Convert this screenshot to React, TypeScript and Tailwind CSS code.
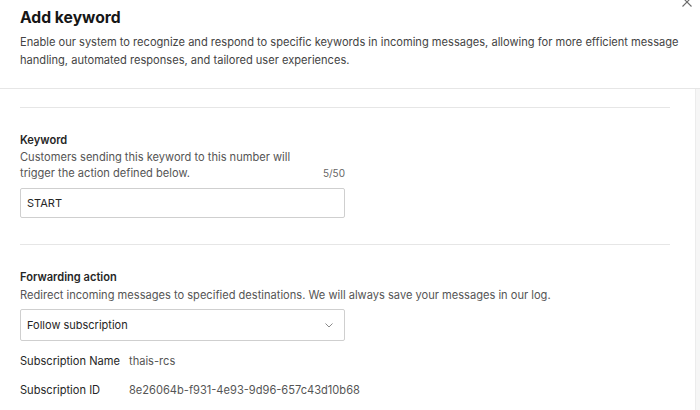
import React from "react";

const Divider = () => <div className="h-px bg-[#e6e6e6]" />;

const ChevronDown = () => (
  <svg width="12" height="12" viewBox="0 0 12 12" fill="none" stroke="#8a8a8a" strokeWidth="1">
    <path d="M2.5 4.5 6 8l3.5-3.5" />
  </svg>
);

const CloseIcon = () => (
  <svg width="12" height="12" viewBox="0 0 12 12" fill="none" stroke="#6b6b6b" strokeWidth="1.1">
    <path d="M1.5 1.5l9 9M10.5 1.5l-9 9" />
  </svg>
);

export default function App() {
  return (
    <div
      className="relative w-[700px] h-[410px] overflow-hidden bg-white text-[#1f1f1f]"
      style={{ fontFamily: "Inter, 'Noto Sans', sans-serif" }}
    >
      {/* header */}
      <div className="px-5 pt-[6px] pb-[19px] border-b border-[#e6e6e6]">
        <h2 className="text-[15.7px] leading-[24px] font-bold text-[#161616]">Add keyword</h2>
        <p className="mt-[3px] text-[11.1px] leading-[18px] text-[#444]">
          Enable our system to recognize and respond to specific keywords in incoming messages, allowing for more efficient message
          handling, automated responses, and tailored user experiences.
        </p>
      </div>
      <button className="absolute right-[7px] top-[-4px] p-0">
        <CloseIcon />
      </button>

      {/* body */}
      <div className="flex h-[321px]">
        <div className="flex-1 pl-5 pr-[25px] pt-[18px]">
          <Divider />

          <div className="pt-6 pb-[26px]">
            <div className="w-[325px]">
              <div className="text-[11.1px] leading-[16px] font-semibold text-[#262626] mb-px">Keyword</div>
              <div className="flex items-end justify-between">
                <p className="w-[285px] text-[11.1px] leading-[16px] text-[#555]">
                  Customers sending this keyword to this number will trigger the action defined below.
                </p>
                <span className="text-[10px] leading-[16px] text-[#666]">5/50</span>
              </div>
              <div className="mt-[7px] h-[30px] border border-[#cfcfcf] rounded-[2px] flex items-center px-[6px] text-[11px] text-[#262626]">
                START
              </div>
            </div>
          </div>

          <Divider />

          <div className="pt-6">
            <div className="text-[11.1px] leading-[16px] font-semibold text-[#262626] mb-[2px]">Forwarding action</div>
            <p className="text-[11.1px] leading-[16px] text-[#555]">
              Redirect incoming messages to specified destinations. We will always save your messages in our log.
            </p>
            <div className="mt-[6px] w-[325px] h-[32px] border border-[#cfcfcf] rounded-[2px] flex items-center justify-between pl-[6px] pr-[9px] text-[11px] text-[#262626]">
              <span>Follow subscription</span>
              <ChevronDown />
            </div>

            <div className="mt-3 flex flex-col gap-[13px] text-[11.1px] leading-[16px]">
              <div className="flex">
                <span className="w-[109px] text-[#262626]">Subscription Name</span>
                <span className="text-[#555]">thais-rcs</span>
              </div>
              <div className="flex">
                <span className="w-[109px] text-[#262626]">Subscription ID</span>
                <span className="text-[#555]">8e26064b-f931-4e93-9d96-657c43d10b68</span>
              </div>
            </div>
          </div>
        </div>
        <div className="w-[5px] bg-[#f6f6f6] border-l border-[#ececec]" />
      </div>
    </div>
  );
}
